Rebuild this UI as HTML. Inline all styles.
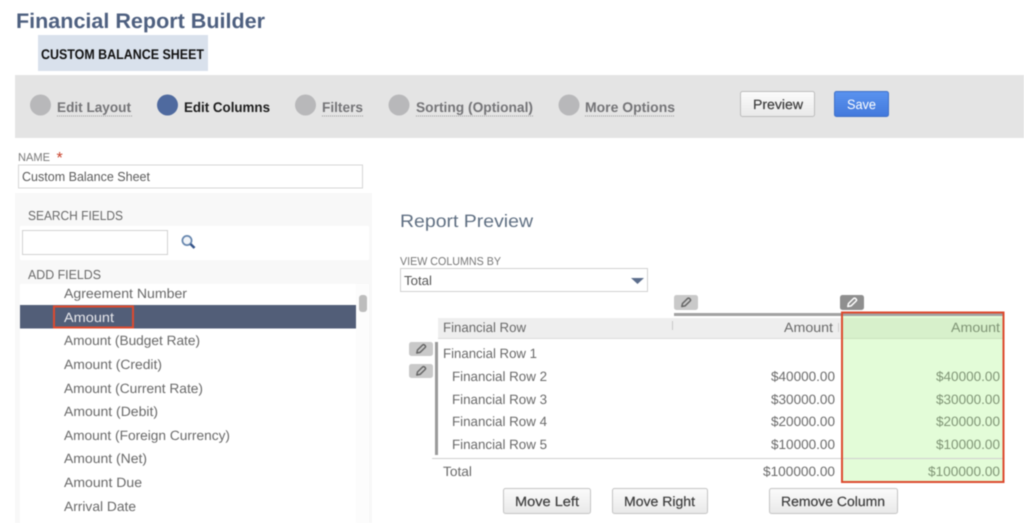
<!DOCTYPE html>
<html lang="en"><head><meta charset="utf-8"><title>Financial Report Builder</title>
<style>
html,body{margin:0;padding:0;background:#fff;width:1024px;height:523px;overflow:hidden}
svg{display:block;filter:blur(.4px)}
text{font-family:"Liberation Sans",sans-serif;font-size:13.5px;fill:#696969;text-rendering:geometricPrecision}
.b{font-weight:bold}
.tab{font-weight:bold;font-size:14px;fill:#747477}
.u{stroke:#9a9a9a;stroke-width:1;stroke-dasharray:1 1}
.g{fill:#7f9475}
.lab{font-size:11.5px;fill:#777}
</style></head><body>
<svg width="1024" height="523" viewBox="0 0 1024 523" xmlns="http://www.w3.org/2000/svg">
<defs>
<linearGradient id="btn" x1="0" y1="0" x2="0" y2="1"><stop offset="0" stop-color="#fbfbfb"/><stop offset="1" stop-color="#e9e9e9"/></linearGradient>
<linearGradient id="sv" x1="0" y1="0" x2="0" y2="1"><stop offset="0" stop-color="#5a93ef"/><stop offset="1" stop-color="#4379dc"/></linearGradient>
<g id="pen"><path d="M-4.2 4 L-3.5 1 L1.6 -4 Q2.6 -4.8 3.6 -3.9 L4.2 -3.3 Q5 -2.3 4.1 -1.5 L-1 3.4 Z" fill="none" stroke="currentColor" stroke-width="1.5" stroke-linejoin="round"/></g>
</defs>

<text x="16" y="28" class="b" style="font-size:21px;fill:#4e6080" textLength="249" lengthAdjust="spacingAndGlyphs">Financial Report Builder</text>
<rect x="38" y="35" width="170" height="36" fill="#d9e1ec"/>
<text x="41" y="59" class="b" style="font-size:14px;fill:#111" textLength="163" lengthAdjust="spacingAndGlyphs">CUSTOM BALANCE SHEET</text>

<rect x="15" y="75" width="1009" height="63" fill="#e4e4e4"/>
<circle cx="40.5" cy="105" r="10.5" fill="#b8b8ba"/>
<circle cx="167.5" cy="105" r="10.5" fill="#4f6a9f"/>
<circle cx="305.5" cy="105" r="10.5" fill="#b8b8ba"/>
<circle cx="399" cy="105" r="10.5" fill="#b8b8ba"/>
<circle cx="569" cy="105" r="10.5" fill="#b8b8ba"/>
<text x="57" y="112" class="tab" textLength="74" lengthAdjust="spacingAndGlyphs">Edit Layout</text>
<line x1="57" y1="116" x2="132" y2="116" class="u"/>
<text x="184" y="112" class="tab" style="fill:#1c1c1c" textLength="86" lengthAdjust="spacingAndGlyphs">Edit Columns</text>
<text x="322" y="112" class="tab" textLength="41" lengthAdjust="spacingAndGlyphs">Filters</text>
<line x1="322" y1="116" x2="364" y2="116" class="u"/>
<text x="416" y="112" class="tab" textLength="117" lengthAdjust="spacingAndGlyphs">Sorting (Optional)</text>
<line x1="416" y1="116" x2="534" y2="116" class="u"/>
<text x="585" y="112" class="tab" textLength="90" lengthAdjust="spacingAndGlyphs">More Options</text>
<line x1="585" y1="116" x2="675" y2="116" class="u"/>

<rect x="740.5" y="91.5" width="74" height="25" rx="2" fill="url(#btn)" stroke="#bdbdbd"/>
<text x="753" y="109" style="font-size:13.5px;fill:#3c3c3c;stroke:#3c3c3c;stroke-width:.2" textLength="50" lengthAdjust="spacingAndGlyphs">Preview</text>
<rect x="834.5" y="91.5" width="54" height="25" rx="2" fill="url(#sv)" stroke="#3f70c8"/>
<text x="847" y="109" style="font-size:13.5px;fill:#fff" textLength="29" lengthAdjust="spacingAndGlyphs">Save</text>

<text x="18" y="161" class="lab" textLength="32" lengthAdjust="spacingAndGlyphs">NAME</text>
<text x="56.5" y="163" style="font-size:16px;fill:#c8402a">*</text>
<rect x="18.5" y="165" width="344" height="23" fill="#fff" stroke="#d6d6d6"/>
<text x="22" y="181" style="font-size:13px;fill:#5c5c5c" textLength="128" lengthAdjust="spacingAndGlyphs">Custom Balance Sheet</text>

<rect x="15" y="193" width="357" height="330" fill="#f8f8f8"/>
<text x="28" y="220" style="font-size:13px" textLength="95" lengthAdjust="spacingAndGlyphs">SEARCH FIELDS</text>
<rect x="20" y="226" width="349" height="34" fill="#fff"/>
<rect x="22.5" y="230.5" width="145" height="24" fill="#fff" stroke="#d2d2d2"/>
<circle cx="187" cy="240.5" r="4.6" fill="#f2f5f9" stroke="#6686ae" stroke-width="1.7"/>
<line x1="190.500" y1="244" x2="194.500" y2="248" stroke="#37558a" stroke-width="2.6"/>
<text x="28" y="279" style="font-size:13px" textLength="73" lengthAdjust="spacingAndGlyphs">ADD FIELDS</text>
<rect x="20" y="284" width="336" height="239" fill="#fff"/>
<rect x="356" y="284" width="13" height="239" fill="#fcfcfc"/>
<rect x="359" y="295" width="8" height="17" rx="3" fill="#bdbdbd"/>
<rect x="20" y="305" width="336" height="23.5" fill="#525e78"/>
<rect x="54" y="306.5" width="79" height="21" fill="none" stroke="#dd4a2e" stroke-width="2"/>
<text x="64" y="298" textLength="123" lengthAdjust="spacingAndGlyphs">Agreement Number</text>
<text x="64" y="322" style="fill:#e8e8ec" textLength="50" lengthAdjust="spacingAndGlyphs">Amount</text>
<text x="64" y="345" textLength="136" lengthAdjust="spacingAndGlyphs">Amount (Budget Rate)</text>
<text x="64" y="369" textLength="98" lengthAdjust="spacingAndGlyphs">Amount (Credit)</text>
<text x="64" y="393" textLength="139" lengthAdjust="spacingAndGlyphs">Amount (Current Rate)</text>
<text x="64" y="416" textLength="94" lengthAdjust="spacingAndGlyphs">Amount (Debit)</text>
<text x="64" y="440" textLength="166" lengthAdjust="spacingAndGlyphs">Amount (Foreign Currency)</text>
<text x="64" y="463" textLength="83" lengthAdjust="spacingAndGlyphs">Amount (Net)</text>
<text x="64" y="487" textLength="78" lengthAdjust="spacingAndGlyphs">Amount Due</text>
<text x="64" y="511" textLength="72" lengthAdjust="spacingAndGlyphs">Arrival Date</text>

<text x="400" y="227" style="font-size:18px;fill:#5f6f82" textLength="133" lengthAdjust="spacingAndGlyphs">Report Preview</text>
<text x="400" y="265" class="lab" textLength="101" lengthAdjust="spacingAndGlyphs">VIEW COLUMNS BY</text>
<rect x="400.5" y="268.5" width="247" height="23" fill="#fff" stroke="#d2d2d2"/>
<text x="404" y="285" style="font-size:13px;fill:#555" textLength="28" lengthAdjust="spacingAndGlyphs">Total</text>
<path d="M631 278 H644 L637.5 284 Z" fill="#5b6d8c"/>

<rect x="438" y="318" width="404" height="20" fill="#eeeeee"/>
<line x1="438" y1="338.5" x2="842" y2="338.5" stroke="#dcdcdc"/>
<rect x="842" y="313" width="161" height="169" fill="#e3fcd8"/>
<rect x="842" y="318" width="161" height="20" fill="#d7f0cb"/>
<line x1="842" y1="338.5" x2="1003" y2="338.5" stroke="#c9e2bd"/>
<rect x="674" y="313" width="329" height="3" fill="#a2a2a2"/>
<line x1="672.5" y1="321" x2="672.5" y2="330" stroke="#c8c8c8"/>
<line x1="838.5" y1="323" x2="838.5" y2="332" stroke="#cfcfcf"/>

<rect x="674" y="295" width="24" height="15" rx="2.5" fill="#c9c9c9"/>
<use href="#pen" x="686" y="302.5" style="color:#666"/>
<rect x="840" y="295" width="24" height="15" rx="2.5" fill="#8f8f8f"/>
<use href="#pen" x="852" y="302.5" style="color:#fff"/>
<rect x="409" y="342" width="24" height="14" rx="2.5" fill="#c9c9c9"/>
<use href="#pen" x="421" y="349" style="color:#666"/>
<rect x="409" y="364" width="24" height="14" rx="2.5" fill="#c9c9c9"/>
<use href="#pen" x="421" y="371" style="color:#666"/>
<rect x="435" y="342" width="3" height="113" fill="#9a9a9a"/>

<text x="443" y="332" textLength="83" lengthAdjust="spacingAndGlyphs">Financial Row</text>
<text x="784" y="332" textLength="49" lengthAdjust="spacingAndGlyphs">Amount</text>
<text x="951" y="332" class="g" textLength="49" lengthAdjust="spacingAndGlyphs">Amount</text>
<text x="443" y="358" textLength="94" lengthAdjust="spacingAndGlyphs">Financial Row 1</text>
<text x="452" y="381" textLength="95" lengthAdjust="spacingAndGlyphs">Financial Row 2</text>
<text x="452" y="404" textLength="95" lengthAdjust="spacingAndGlyphs">Financial Row 3</text>
<text x="452" y="426" textLength="95" lengthAdjust="spacingAndGlyphs">Financial Row 4</text>
<text x="452" y="449" textLength="95" lengthAdjust="spacingAndGlyphs">Financial Row 5</text>
<line x1="432" y1="458.5" x2="1003" y2="458.5" stroke="#d0d0d0"/>
<text x="443" y="476" textLength="29" lengthAdjust="spacingAndGlyphs">Total</text>
<text x="771" y="381" textLength="64" lengthAdjust="spacingAndGlyphs">$40000.00</text>
<text x="771" y="404" textLength="64" lengthAdjust="spacingAndGlyphs">$30000.00</text>
<text x="771" y="426" textLength="64" lengthAdjust="spacingAndGlyphs">$20000.00</text>
<text x="771" y="449" textLength="64" lengthAdjust="spacingAndGlyphs">$10000.00</text>
<text x="763" y="476" textLength="72" lengthAdjust="spacingAndGlyphs">$100000.00</text>
<text x="936" y="381" class="g" textLength="64" lengthAdjust="spacingAndGlyphs">$40000.00</text>
<text x="936" y="404" class="g" textLength="64" lengthAdjust="spacingAndGlyphs">$30000.00</text>
<text x="936" y="426" class="g" textLength="64" lengthAdjust="spacingAndGlyphs">$20000.00</text>
<text x="936" y="449" class="g" textLength="64" lengthAdjust="spacingAndGlyphs">$10000.00</text>
<text x="928" y="476" class="g" textLength="72" lengthAdjust="spacingAndGlyphs">$100000.00</text>
<rect x="842" y="312.500" width="161.500" height="169.500" fill="none" stroke="#dd4a2e" stroke-width="2"/>

<rect x="503.500" y="488.500" width="87" height="25" rx="2" fill="url(#btn)" stroke="#c4c4c4"/>
<text x="515" y="506" style="fill:#3c3c3c;stroke:#3c3c3c;stroke-width:.2" textLength="64" lengthAdjust="spacingAndGlyphs">Move Left</text>
<rect x="612.500" y="488.500" width="95" height="25" rx="2" fill="url(#btn)" stroke="#c4c4c4"/>
<text x="624" y="506" style="fill:#3c3c3c;stroke:#3c3c3c;stroke-width:.2" textLength="71" lengthAdjust="spacingAndGlyphs">Move Right</text>
<rect x="769.500" y="488.500" width="128" height="25" rx="2" fill="url(#btn)" stroke="#c4c4c4"/>
<text x="781" y="506" style="fill:#3c3c3c;stroke:#3c3c3c;stroke-width:.2" textLength="104" lengthAdjust="spacingAndGlyphs">Remove Column</text>
</svg>
</body></html>
